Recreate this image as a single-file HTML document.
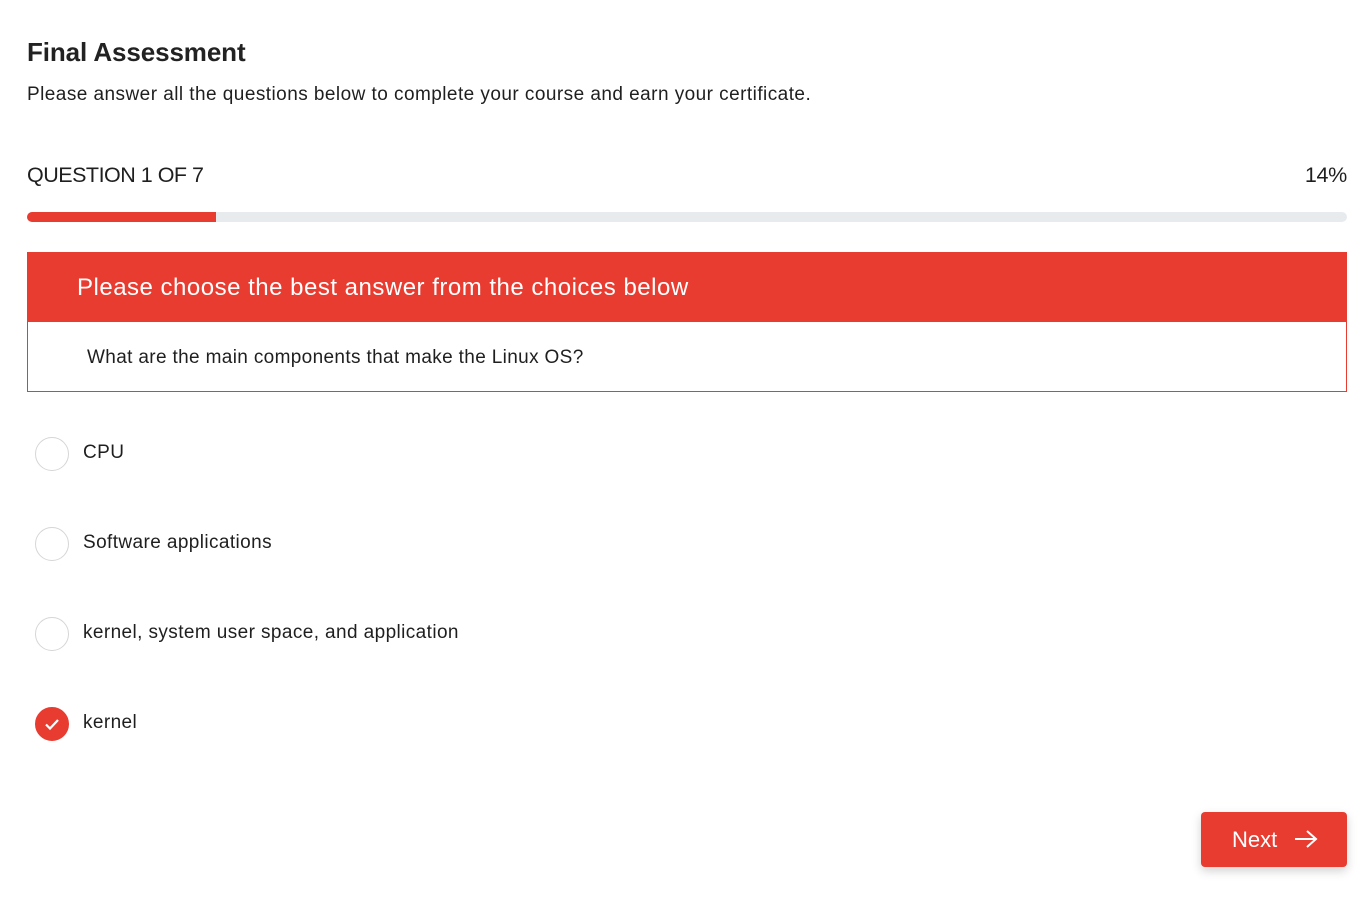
<!DOCTYPE html>
<html><head><style>
body{margin:0;background:#fff;font-family:"Liberation Sans",sans-serif;color:#1f1f1f;width:1366px;height:902px;position:relative;overflow:hidden}
.a{position:absolute}
.radio{position:absolute;left:35px;width:34px;height:34px;border:1px solid #d6d6d6;border-radius:50%;box-sizing:border-box}
.opt{position:absolute;left:83px;font-size:19px;letter-spacing:0.4px}
</style></head><body>
<div class="a" style="left:27px;top:37px;font-size:26px;font-weight:bold;color:#222;letter-spacing:-0.1px">Final Assessment</div>
<div class="a" style="left:27px;top:84px;font-size:19px;letter-spacing:0.45px">Please answer all the questions below to complete your course and earn your certificate.</div>
<div class="a" style="left:27px;top:163px;font-size:21.5px;letter-spacing:-0.5px">QUESTION 1 OF 7</div>
<div class="a" style="right:19px;top:163px;font-size:21.5px;letter-spacing:-0.3px">14%</div>
<div class="a" style="left:27px;top:212px;width:1320px;height:10px;background:#e8ebee;border-radius:5px"></div>
<div class="a" style="left:27px;top:212px;width:189px;height:10px;background:#e83c31;border-radius:5px 0 0 5px"></div>
<div class="a" style="left:27px;top:252px;width:1320px;height:70px;background:#e83c31"></div>
<div class="a" style="left:77px;top:274px;font-size:24px;color:#fff;letter-spacing:0.5px">Please choose the best answer from the choices below</div>
<div class="a" style="left:27px;top:321px;width:1320px;height:71px;border:1px solid #e83c31;border-top:none;box-sizing:border-box"></div>
<div class="a" style="left:87px;top:347px;font-size:19px;letter-spacing:0.35px">What are the main components that make the Linux OS?</div>
<div class="radio" style="top:437px"></div><div class="opt" style="top:442px">CPU</div>
<div class="radio" style="top:527px"></div><div class="opt" style="top:532px">Software applications</div>
<div class="radio" style="top:617px"></div><div class="opt" style="top:622px">kernel, system user space, and application</div>
<div class="radio" style="top:707px;background:#e83c31;border-color:#e83c31"><svg width="34" height="34" viewBox="0 0 34 34" style="position:absolute;left:-1px;top:-1px"><path d="M11 17.5 L15 21.5 L23 13" stroke="#fff" stroke-width="2.2" fill="none"/></svg></div><div class="opt" style="top:712px">kernel</div>
<div class="a" style="left:1201px;top:812px;width:146px;height:55px;background:#e83c31;border-radius:4px;box-shadow:0 4px 10px rgba(0,0,0,.18)">
<span class="a" style="left:31px;top:15px;font-size:22px;color:#fff">Next</span>
<svg class="a" style="left:92px;top:16px" width="26" height="22" viewBox="0 0 26 22"><path d="M2 11H23M14 3L23 11L14 19" stroke="#fff" stroke-width="2" fill="none"/></svg>
</div>
</body></html>
